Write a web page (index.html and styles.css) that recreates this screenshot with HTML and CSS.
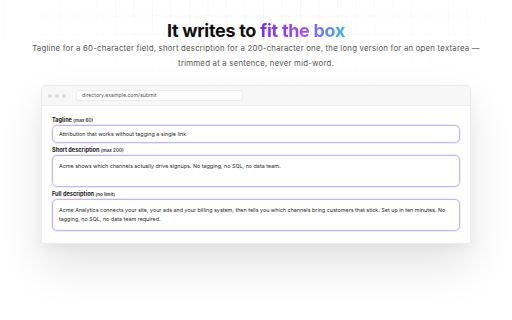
FILE: index.html
```html
<!DOCTYPE html>
<html lang="en">
<head>
  <meta charset="UTF-8" />
  <title>It writes to fit the box</title>
  <link rel="stylesheet" href="styles.css">
</head>
<body>

<main class="page">
  <h1 class="title">It writes to <span class="accent">fit the box</span></h1>
  <p class="lead">Tagline for a 60-character field, short description for a 200-character one, the long version for an open textarea —<br>trimmed at a sentence, never mid-word.</p>

  <div class="window">
    <div class="window-bar">
      <div class="dots"><span></span><span></span><span></span></div>
      <div class="url">directory.example.com/submit</div>
    </div>

    <div class="form">
      <div class="field">
        <div class="label">Tagline <small>(max 60)</small></div>
        <div class="box box-line">Attribution that works without tagging a single link</div>
      </div>
      <div class="field">
        <div class="label">Short description <small>(max 200)</small></div>
        <div class="box box-area">Acme shows which channels actually drive signups. No tagging, no SQL, no data team.</div>
      </div>
      <div class="field">
        <div class="label">Full description <small>(no limit)</small></div>
        <div class="box box-area">Acme Analytics connects your site, your ads and your billing system, then tells you which channels bring customers that stick. Set up in ten minutes. No tagging, no SQL, no data team required.</div>
      </div>
    </div>
  </div>
</main>

</body>
</html>
```

FILE: styles.css
```css
* {
  box-sizing: border-box;
}

html, body {
  height: 100%;
}

body {
  margin: 0;
  font-family: Inter, 'Noto Sans', sans-serif;
  color: #1a1a1a;
  background-color: #fff;
  background-image:
    radial-gradient(ellipse 70% 90px at 50% 0, rgba(255,255,255,0) 0%, #fff 100%),
    linear-gradient(90deg, rgba(120, 100, 230, 0.06) 1px, transparent 1px),
    linear-gradient(0deg, rgba(120, 100, 230, 0.06) 1px, transparent 1px);
  background-size: 100% 100%, 18.5px 18.5px, 18.5px 18.5px;
  background-repeat: no-repeat, repeat, repeat;
  background-position: 0 0, 4px 0, 0 -2px;
}

.page {
  padding-top: 21px;
  display: flex;
  flex-direction: column;
  align-items: center;
}

.title {
  margin: 0;
  font-size: 18px;
  line-height: 20px;
  font-weight: 700;
  letter-spacing: -0.3px;
  color: #111;
}

.accent {
  background: linear-gradient(90deg, #7a2cf3 0%, #a24bf0 50%, #31b6f6 100%);
  -webkit-background-clip: text;
  background-clip: text;
  color: transparent;
}

.lead {
  margin: 0;
  font-size: 7.8px;
  line-height: 15px;
  color: #555;
  text-align: center;
  letter-spacing: 0.22px;
}

.window {
  margin-top: 14px;
  width: 430px;
  background: #fff;
  border: 1px solid #ececec;
  border-radius: 5px 5px 0 0;
  box-shadow: 0 22px 45px rgba(0, 0, 0, 0.11), 0 4px 12px rgba(0, 0, 0, 0.04);
  overflow: hidden;
}

.window-bar {
  display: flex;
  align-items: center;
  gap: 10px;
  height: 20px;
  padding: 0 6px;
  background: #f7f7f7;
  border-bottom: 1px solid #ededed;
}

.dots {
  display: flex;
  gap: 3px;
}

.dots span {
  width: 4px;
  height: 4px;
  border-radius: 50%;
  background: #dcdcdc;
}

.url {
  width: 167px;
  height: 11px;
  padding-left: 5px;
  background: #fff;
  border: 1px solid #ececec;
  border-radius: 3px;
  font-size: 5.2px;
  line-height: 9px;
  color: #555;
}

.form {
  display: flex;
  flex-direction: column;
  gap: 4px;
  padding: 11px 10px 12px;
}

.label {
  font-size: 5.6px;
  font-weight: 700;
  color: #1a1a1a;
  margin-bottom: 1px;
  line-height: 7px;
}

.label small {
  font-size: 4.6px;
  font-weight: 600;
  color: #333;
}

.box {
  border: 1px solid #c2b3fb;
  border-radius: 5px;
  background: #fff;
  box-shadow: 0 0 0 1px rgba(194, 179, 251, 0.25);
  padding: 5.5px 3px 5.5px 6px;
  font-size: 5.4px;
  line-height: 9px;
  color: #2a2a2a;
}

.box-line {
  height: 18px;
  padding-top: 3.5px;
}

.box-area {
  height: 32px;
}
```
